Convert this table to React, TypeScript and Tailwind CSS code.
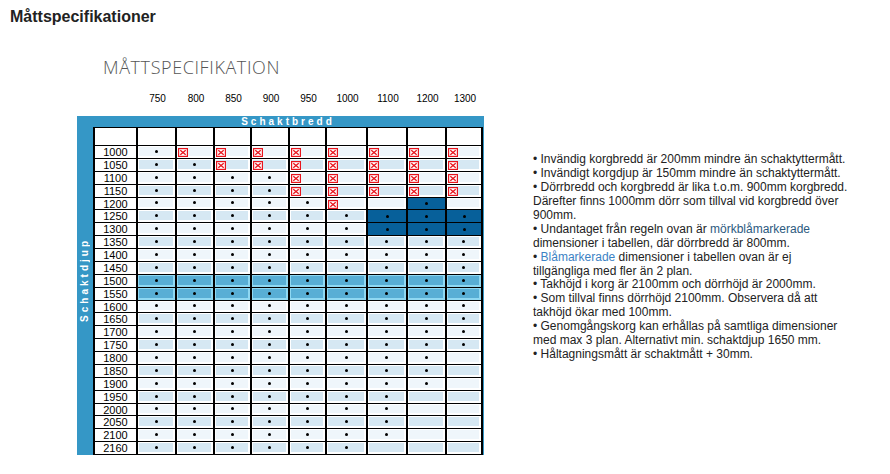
import React from 'react';

const COLS = [
  { label: '750', w: 'w-[39px]' },
  { label: '800', w: 'w-[38px]' },
  { label: '850', w: 'w-[37px]' },
  { label: '900', w: 'w-[38px]' },
  { label: '950', w: 'w-[37px]' },
  { label: '1000', w: 'w-[41px]' },
  { label: '1100', w: 'w-[40px]' },
  { label: '1200', w: 'w-[39px]' },
  { label: '1300', w: 'w-[36px]' },
];

const DEPTHS = [...Array.from({ length: 23 }, (_, i) => 1000 + i * 50), 2160];

function lastDot(d: number) {
  if (d === 1000) return 0;
  if (d === 1050) return 1;
  if (d <= 1150) return 3;
  if (d <= 1750) return 8;
  if (d <= 1900) return 7;
  if (d <= 2100) return 6;
  return 5;
}

function hasDot(d: number, c: number) {
  if (d === 1200) return c <= 4 || c === 7;
  return c <= lastDot(d);
}

function hasX(d: number, c: number) {
  if (d === 1000) return c >= 1;
  if (d === 1050) return c >= 2;
  if (d === 1100 || d === 1150) return c >= 4;
  if (d === 1200) return c === 5;
  return false;
}

function isDark(d: number, c: number) {
  return (d === 1200 && c === 7) || ((d === 1250 || d === 1300) && c >= 6);
}

function BrokenImg() {
  return (
    <svg className="absolute left-[1px] top-[2px]" width="10" height="9" viewBox="0 0 10 9">
      <rect x="0" y="0" width="10" height="9" fill="#e8141c" />
      <rect x="1.2" y="1.2" width="7.6" height="6.6" fill="#fff" />
      <path d="M2.3 2.2L7.7 6.8M7.7 2.2L2.3 6.8" stroke="#e8141c" strokeWidth="1.3" />
    </svg>
  );
}

function Cell({ d, c, w, row }: { d: number; c: number; w: string; row: number }) {
  const dot = hasDot(d, c) ? <span className="w-[3px] h-[3px] rounded-full bg-black" /> : null;
  if (isDark(d, c)) {
    return (
      <div className={`relative ${w} h-full border-r-2 border-black bg-[#07609a] flex items-center justify-center`}>
        {dot}
      </div>
    );
  }
  const mid = d === 1500 || d === 1550;
  const outer = mid ? 'bg-[#8fd8f2]' : 'bg-white';
  const fill = mid ? 'bg-[#58aed5]' : row % 2 === 0 ? 'bg-[#eff6fb]' : 'bg-[#d6e8f3]';
  return (
    <div className={`relative ${w} h-full border-r-2 border-black ${outer} pt-[1px] pb-[2px] pl-[1px] pr-[2px]`}>
      <div className={`h-full flex items-center justify-center ${fill}`}>{dot}</div>
      {hasX(d, c) && <BrokenImg />}
    </div>
  );
}

export default function App() {
  return (
    <div className="w-[890px] h-[474px] bg-white text-[#222] font-['Liberation_Sans',Arial,sans-serif] overflow-hidden">
      <h1 className="pl-[10px] pt-[8px] text-[16px] leading-[18px] font-bold">Måttspecifikationer</h1>

      <div className="flex mt-[31px] pl-[77px]">
        <div className="w-[407px]">
          <div className="pl-[26px] h-[20px] text-[18px] leading-[20px] tracking-[0.6px] font-['Open_Sans',sans-serif] font-light text-[#555]">
            MÅTTSPECIFIKATION
          </div>

          <div className="flex mt-[16px] pl-[61px] h-[12px] text-[10px] leading-[12px] text-black">
            {COLS.map((col) => (
              <div key={col.label} className={`${col.w} text-center`}>{col.label}</div>
            ))}
          </div>

          <div className="mt-[11px] bg-[#3597c6]">
            <div className="h-[11px] pl-[16px] pr-[1px] text-center text-white font-bold text-[10px] leading-[11px] tracking-[3px]">
              Schaktbredd
            </div>
            <div className="flex">
              <div className="w-[16px] flex items-center justify-center pb-[22px]">
                <span className="[writing-mode:vertical-rl] rotate-180 text-white font-bold text-[10px] leading-none tracking-[3px]">
                  Schaktdjup
                </span>
              </div>
              <div className="w-[390px] bg-white border-l-2 border-t border-black">
                <div className="flex h-[18px] border-b border-black">
                  <div className="w-[43px] h-full border-r-2 border-black" />
                  {COLS.map((col) => (
                    <div key={col.label} className={`${col.w} h-full border-r-2 border-black`} />
                  ))}
                </div>
                {DEPTHS.map((d, r) => (
                  <div key={d} className="flex h-[12.875px] border-b border-black">
                    <div className="w-[43px] h-full border-r-2 border-black text-center text-[11px] leading-[12px] text-black">
                      {d}
                    </div>
                    {COLS.map((col, c) => (
                      <Cell key={col.label} d={d} c={c} w={col.w} row={r} />
                    ))}
                  </div>
                ))}
              </div>
            </div>
          </div>
        </div>

        <div className="ml-[49px] mt-[96px] text-[12px] leading-[13.93px] whitespace-nowrap">
          <div>• Invändig korgbredd är 200mm mindre än schaktyttermått.</div>
          <div>• Invändigt korgdjup är 150mm mindre än schaktyttermått.</div>
          <div>• Dörrbredd och korgbredd är lika t.o.m. 900mm korgbredd.</div>
          <div>Därefter finns 1000mm dörr som tillval vid korgbredd över</div>
          <div>900mm.</div>
          <div>• Undantaget från regeln ovan är <span className="text-[#2c5a80]">mörkblåmarkerade</span></div>
          <div>dimensioner i tabellen, där dörrbredd är 800mm.</div>
          <div>• <span className="text-[#3b82c4]">Blåmarkerade</span> dimensioner i tabellen ovan är ej</div>
          <div>tillgängliga med fler än 2 plan.</div>
          <div>• Takhöjd i korg är 2100mm och dörrhöjd är 2000mm.</div>
          <div>• Som tillval finns dörrhöjd 2100mm. Observera då att</div>
          <div>takhöjd ökar med 100mm.</div>
          <div>• Genomgångskorg kan erhållas på samtliga dimensioner</div>
          <div>med max 3 plan. Alternativt min. schaktdjup 1650 mm.</div>
          <div>• Håltagningsmått är schaktmått + 30mm.</div>
        </div>
      </div>
    </div>
  );
}
